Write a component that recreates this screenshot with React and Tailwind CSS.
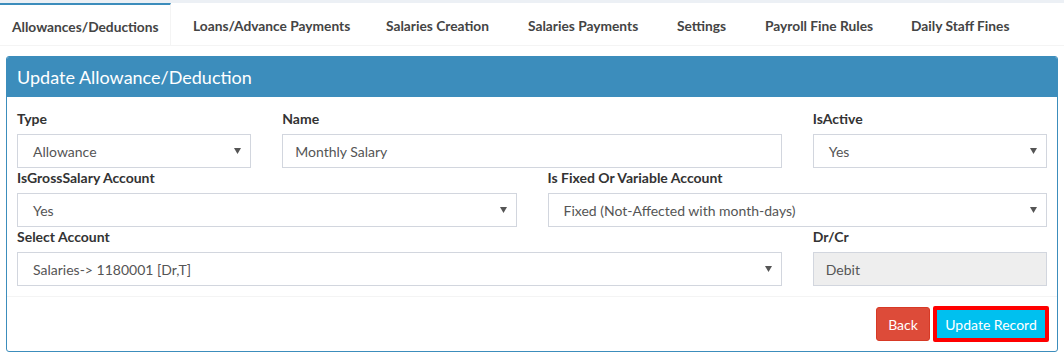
import React from 'react';

const tabs = [
  { label: 'Allowances/Deductions', w: 'w-[171px]' },
  { label: 'Loans/Advance Payments', w: 'w-[186px]' },
  { label: 'Salaries Creation', w: 'w-[135px]' },
  { label: 'Salaries Payments', w: 'w-[142px]' },
  { label: 'Settings', w: 'w-[81px]' },
  { label: 'Payroll Fine Rules', w: 'w-[139px]' },
  { label: 'Daily Staff Fines', w: 'w-[128px]' },
];

// little caret used by the select boxes
const Caret = () => (
  <svg width="7" height="6" viewBox="0 0 7 6" className="shrink-0">
    <path d="M0 0 H7 L3.5 6 Z" fill="#555" />
  </svg>
);

const Label = ({ children }) => (
  <div className="text-[14px] font-bold leading-[20px] text-[#333]">{children}</div>
);

const SelectBox = ({ value }) => (
  <div className="mt-[5px] flex h-[34px] items-center justify-between border border-[#d2d6de] bg-white pl-[15px] pr-[9px] text-[14px] text-[#555]">
    <span>{value}</span>
    <Caret />
  </div>
);

const TextBox = ({ value, disabled }) => (
  <div
    className={
      'mt-[5px] flex h-[34px] items-center border border-[#d2d6de] px-[12px] text-[14px] text-[#555] ' +
      (disabled ? 'bg-[#eeeeee]' : 'bg-white')
    }
  >
    {value}
  </div>
);

const App = () => {
  return (
    <div className="min-h-[356px] w-[1064px] bg-white font-['Lato',sans-serif]">
      <div className="h-[3px] bg-[#ecf0f5]" />

      {/* tabs */}
      <div className="flex h-[43px] border-b border-[#f4f4f4]">
        {tabs.map((t, i) => (
          <div
            key={t.label}
            className={
              'flex shrink-0 items-center pt-[5px] text-[13.75px] font-bold whitespace-nowrap text-[#444] ' +
              t.w +
              (i === 0
                ? ' border-t-2 border-r border-t-[#3c8dbc] border-r-[#f4f4f4] pl-[12px]'
                : ' ml-[7px] pl-[15px]')
            }
          >
            {t.label}
          </div>
        ))}
      </div>

      {/* panel */}
      <div className="mx-[6px] mt-[10px] w-[1052px] overflow-hidden rounded-[3px] border border-[#3c8dbc]">
        <div className="flex h-[40px] items-center bg-[#3c8dbc] px-[10px] text-[18px] text-white">
          Update Allowance/Deduction
        </div>

        <div className="px-[10px] pb-[10px] pt-[12px]">
          <div className="grid grid-cols-12 gap-x-[31px]">
            <div className="col-span-3">
              <Label>Type</Label>
              <SelectBox value="Allowance" />
            </div>
            <div className="col-span-6">
              <Label>Name</Label>
              <TextBox value="Monthly Salary" />
            </div>
            <div className="col-span-3">
              <Label>IsActive</Label>
              <SelectBox value="Yes" />
            </div>

            <div className="col-span-6">
              <Label>IsGrossSalary Account</Label>
              <SelectBox value="Yes" />
            </div>
            <div className="col-span-6">
              <Label>Is Fixed Or Variable Account</Label>
              <SelectBox value="Fixed (Not-Affected with month-days)" />
            </div>

            <div className="col-span-9">
              <Label>Select Account</Label>
              <SelectBox value="Salaries-> 1180001 [Dr,T]" />
            </div>
            <div className="col-span-3">
              <Label>Dr/Cr</Label>
              <TextBox value="Debit" disabled />
            </div>
          </div>
        </div>

        <div className="flex h-[55px] items-center justify-end gap-[3px] border-t border-[#f4f4f4] pr-[8px]">
          <button className="h-[34px] w-[54px] rounded-[3px] border border-[#d73925] bg-[#dd4b39] text-[14px] text-white">
            Back
          </button>
          <button className="h-[36px] w-[116px] rounded-[2px] border-[4px] border-[#ff0000] bg-[#00c0ef] text-[14px] text-white">
            Update Record
          </button>
        </div>
      </div>
    </div>
  );
};

export default App;
